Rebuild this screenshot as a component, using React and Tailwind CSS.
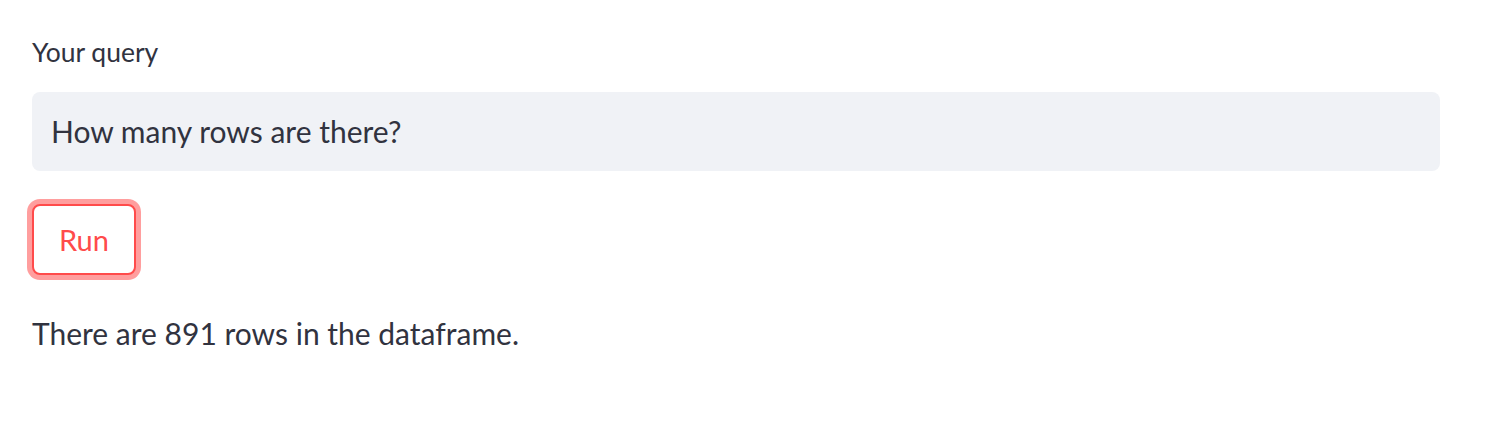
import React from 'react';

export default function App() {
  return (
    <div className="w-full h-[422px] bg-white text-[#31333F] font-['Lato',sans-serif] overflow-hidden">
      <div className="pl-[32px] pr-[66px] pt-[36px] flex flex-col">
        {/* label */}
        <label className="text-[26.5px] leading-[32px] h-[32px]">Your query</label>

        {/* text input */}
        <div className="mt-[24px] h-[79px] rounded-[8px] bg-[#F0F2F6] flex items-center px-[19px]">
          <span className="text-[30px]">How many rows are there?</span>
        </div>

        {/* button with focus ring */}
        <div className="mt-[33px]">
          <button className="w-[104px] h-[71px] rounded-[8px] border-2 border-[#FF4B4B] bg-white text-[#FF4B4B] text-[29px] ring-[5px] ring-[#FF9E9E] flex items-center justify-center">
            Run
          </button>
        </div>

        <p className="mt-[38px] text-[30px] leading-[40px]">There are 891 rows in the dataframe.</p>
      </div>
    </div>
  );
}
